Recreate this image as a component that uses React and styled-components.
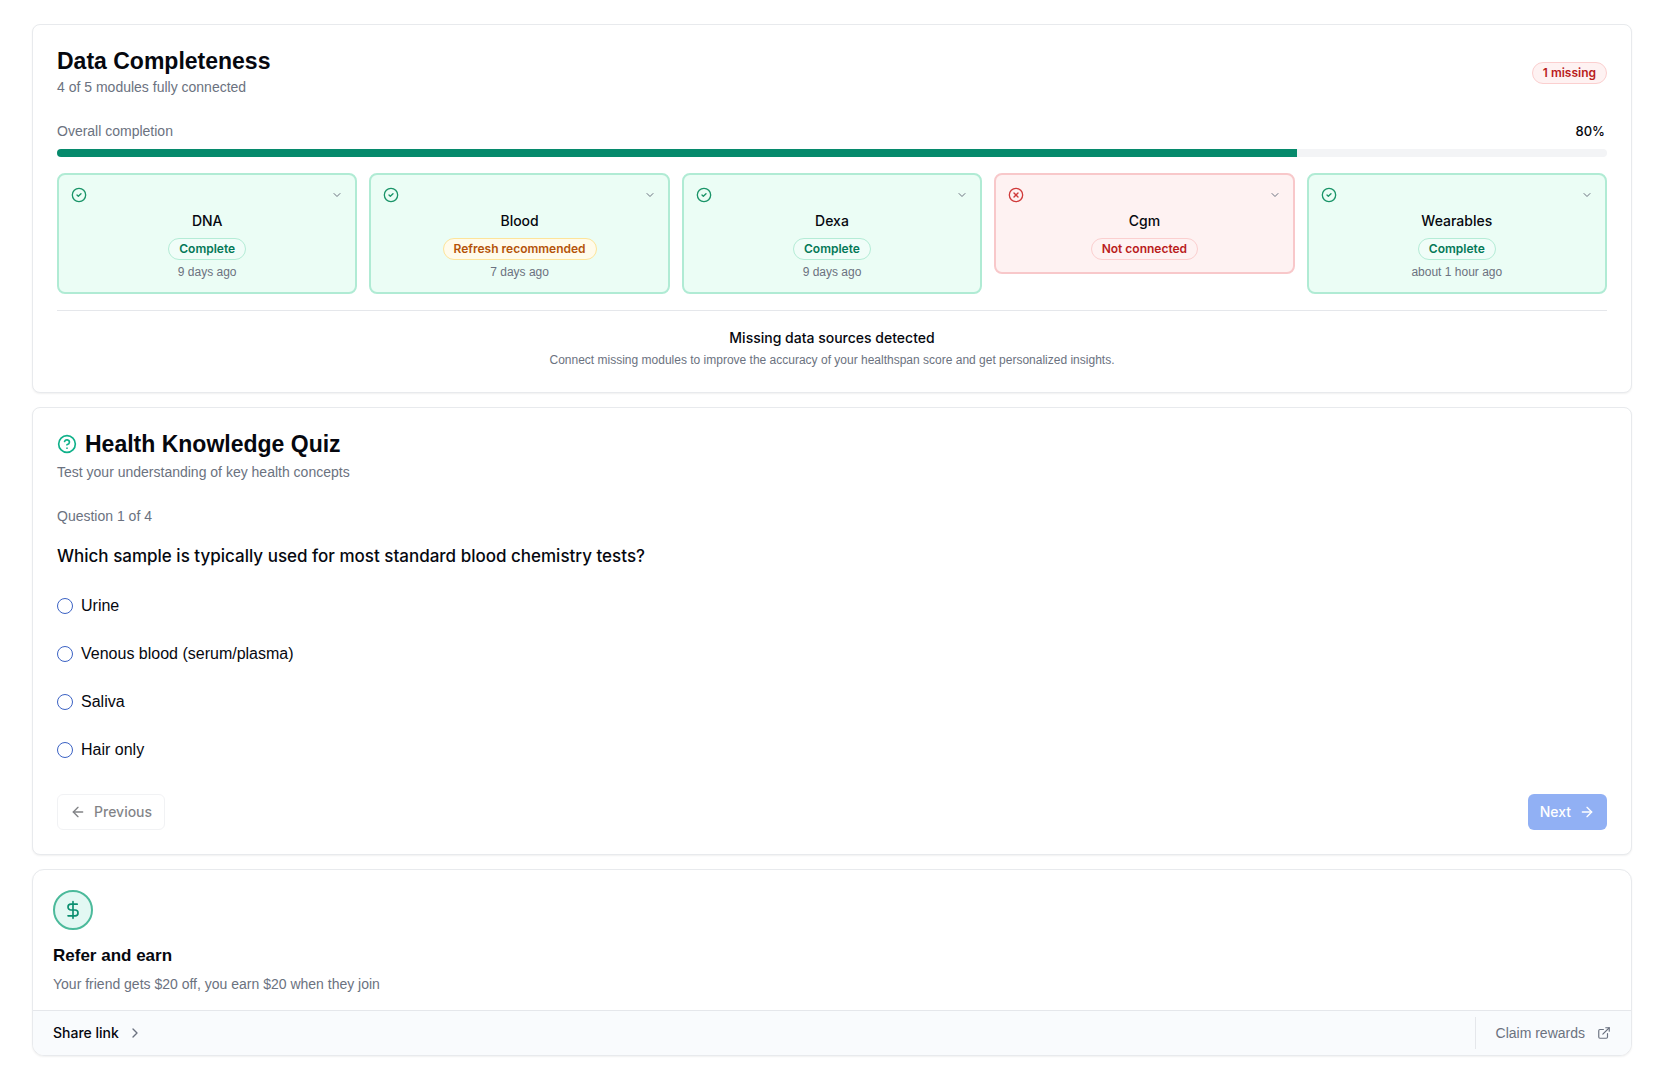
import { useState } from "react";
import styled, { createGlobalStyle } from "styled-components";
import {
  ArrowLeft,
  ArrowRight,
  ChevronDown,
  ChevronRight,
  CircleCheck,
  CircleHelp,
  CircleX,
  DollarSign,
  ExternalLink,
} from "lucide-react";

const modules = [
  { name: "DNA", status: "Complete", tone: "green", updated: "9 days ago" },
  { name: "Blood", status: "Refresh recommended", tone: "amber", updated: "7 days ago" },
  { name: "Dexa", status: "Complete", tone: "green", updated: "9 days ago" },
  { name: "Cgm", status: "Not connected", tone: "red", missing: true },
  { name: "Wearables", status: "Complete", tone: "green", updated: "about 1 hour ago" },
];

const answers = ["Urine", "Venous blood (serum/plasma)", "Saliva", "Hair only"];

const tones = {
  green: { text: "#047857", bg: "#f0fdf8", border: "#b4ecd6" },
  amber: { text: "#b45309", bg: "#fffbeb", border: "#fde49a" },
  red: { text: "#b91c1c", bg: "#fef2f2", border: "#fbcfcf" },
};

const DataCompleteness = () => {
  const connected = modules.filter((module) => !module.missing).length;
  const percent = (connected / modules.length) * 100;

  return (
    <Card>
      <CardHeader>
        <div>
          <CardTitle>Data Completeness</CardTitle>
          <Muted>
            {connected} of {modules.length} modules fully connected
          </Muted>
        </div>
        <Badge $tone="red">{modules.length - connected} missing</Badge>
      </CardHeader>
      <ProgressLabel>
        <Muted as="span">Overall completion</Muted>
        <Percent>{percent}%</Percent>
      </ProgressLabel>
      <Track role="progressbar" aria-label="Overall completion" aria-valuenow={percent}>
        <Bar style={{ width: `${percent}%` }} />
      </Track>
      <ModuleGrid>
        {modules.map((module) => (
          <ModuleItem key={module.name} module={module} />
        ))}
      </ModuleGrid>
      <Notice>
        <NoticeTitle>Missing data sources detected</NoticeTitle>
        <Small>
          Connect missing modules to improve the accuracy of your healthspan score and get
          personalized insights.
        </Small>
      </Notice>
    </Card>
  );
};

const ModuleItem = ({ module }) => {
  const { name, status, tone, updated, missing } = module;

  return (
    <ModuleButton type="button" $missing={missing}>
      <ModuleTop>
        {missing ? <CircleX size={16} color="#d03a3a" /> : <CircleCheck size={16} color="#1a9468" />}
        <ChevronDown size={12} />
      </ModuleTop>
      <ModuleName>{name}</ModuleName>
      <Badge $tone={tone}>{status}</Badge>
      {updated && <Small as="span">{updated}</Small>}
    </ModuleButton>
  );
};

const Quiz = () => {
  const [answer, setAnswer] = useState(null);

  return (
    <Card>
      <QuizHeader>
        <QuizTitle>
          <CircleHelp size={20} color="#10b18a" />
          Health Knowledge Quiz
        </QuizTitle>
        <Muted>Test your understanding of key health concepts</Muted>
      </QuizHeader>
      <Muted>Question 1 of 4</Muted>
      <Question>
        <legend>Which sample is typically used for most standard blood chemistry tests?</legend>
        {answers.map((text) => (
          <Option key={text}>
            <input
              type="radio"
              name="answer"
              checked={answer === text}
              onChange={() => setAnswer(text)}
            />
            {text}
          </Option>
        ))}
      </Question>
      <QuizFooter>
        <QuizButton type="button" disabled>
          <ArrowLeft size={16} />
          Previous
        </QuizButton>
        <QuizButton type="button" $primary disabled={answer === null}>
          Next
          <ArrowRight size={16} />
        </QuizButton>
      </QuizFooter>
    </Card>
  );
};

const Referral = () => (
  <ReferCard>
    <ReferBody>
      <Coin>
        <DollarSign size={20} />
      </Coin>
      <ReferTitle>Refer and earn</ReferTitle>
      <Muted>Your friend gets $20 off, you earn $20 when they join</Muted>
    </ReferBody>
    <ReferFooter>
      <ShareButton type="button">
        Share link
        <ChevronRight size={16} />
      </ShareButton>
      <ClaimLink href="#rewards">
        Claim rewards
        <ExternalLink size={14} />
      </ClaimLink>
    </ReferFooter>
  </ReferCard>
);

const App = () => (
  <>
    <GlobalStyle />
    <Page>
      <DataCompleteness />
      <Quiz />
      <Referral />
    </Page>
  </>
);

const GlobalStyle = createGlobalStyle`
  *, *::before, *::after {
    box-sizing: border-box;
  }
  body {
    margin: 0;
    background: #fff;
    color: #06080f;
    font-family: "Liberation Sans", Arial, sans-serif;
    font-size: 14px;
    line-height: 20px;
  }
  h2, h3, p {
    margin: 0;
  }
  svg {
    flex-shrink: 0;
  }
  button {
    font: inherit;
    color: inherit;
    cursor: pointer;
  }
`;

const Page = styled.main`
  display: flex;
  flex-direction: column;
  gap: 14px;
  padding: 24px 32px;
`;

const Card = styled.section`
  padding: 24px;
  background: #fff;
  border: 1px solid #e8eaed;
  border-radius: 8px;
  box-shadow: 0 1px 2px rgba(0, 0, 0, 0.06);
`;

const CardHeader = styled.header`
  display: flex;
  align-items: center;
  justify-content: space-between;
  margin-bottom: 24px;
`;

const CardTitle = styled.h2`
  margin-bottom: 4px;
  font-size: 23px;
  font-weight: 700;
  line-height: 24px;
`;

const Muted = styled.p`
  color: #6b7280;
`;

const Small = styled.p`
  color: #6b7280;
  font-size: 12px;
  line-height: 16px;
`;

const Badge = styled.span`
  padding: 2px 10px;
  border: 1px solid ${({ $tone }) => tones[$tone].border};
  border-radius: 11px;
  background: ${({ $tone }) => tones[$tone].bg};
  color: ${({ $tone }) => tones[$tone].text};
  font-family: Inter, sans-serif;
  font-size: 12px;
  font-weight: 600;
  line-height: 16px;
`;

const ProgressLabel = styled.div`
  display: flex;
  justify-content: space-between;
  margin-bottom: 8px;
`;

const Percent = styled.span`
  padding-right: 2px;
  font-family: Inter, sans-serif;
  font-size: 13px;
  font-weight: 500;
`;

const Track = styled.div`
  height: 8px;
  overflow: hidden;
  border-radius: 4px;
  background: #f3f4f6;
`;

const Bar = styled.div`
  height: 100%;
  background: #068a6c;
`;

const ModuleGrid = styled.div`
  display: grid;
  grid-template-columns: repeat(5, 1fr);
  align-items: start;
  gap: 12px;
  margin: 16px 0;
`;

const ModuleButton = styled.button`
  display: flex;
  flex-direction: column;
  align-items: center;
  padding: 12px;
  border: 2px solid ${({ $missing }) => ($missing ? "#f8c8ca" : "#b0ebd4")};
  border-radius: 8px;
  background: ${({ $missing }) => ($missing ? "#fef2f2" : "#ebfdf5")};
  ${Small} {
    margin-top: 4px;
  }
`;

const ModuleTop = styled.span`
  display: flex;
  align-items: center;
  align-self: stretch;
  justify-content: space-between;
  margin-bottom: 8px;
  color: #6b7280;
`;

const ModuleName = styled.span`
  margin-bottom: 7px;
  font-family: Inter, sans-serif;
  font-weight: 500;
  line-height: 20px;
`;

const Notice = styled.div`
  padding-top: 17px;
  border-top: 1px solid #e5e7eb;
  text-align: center;
`;

const NoticeTitle = styled.h3`
  margin-bottom: 4px;
  font-family: Inter, sans-serif;
  font-size: 14px;
  font-weight: 500;
`;

const QuizHeader = styled.header`
  margin-bottom: 24px;
`;

const QuizTitle = styled(CardTitle)`
  display: flex;
  align-items: center;
  gap: 8px;
  margin-bottom: 6px;
`;

const Question = styled.fieldset`
  display: flex;
  flex-direction: column;
  gap: 24px;
  margin: 16px 0 32px;
  padding: 0;
  border: 0;
  legend {
    margin-bottom: 24px;
    padding: 0;
    font-family: Inter, sans-serif;
    font-size: 17px;
    font-weight: 500;
    line-height: 28px;
  }
`;

const Option = styled.label`
  display: flex;
  align-items: center;
  align-self: flex-start;
  gap: 8px;
  font-size: 16px;
  line-height: 24px;
  cursor: pointer;
  input {
    appearance: none;
    width: 16px;
    height: 16px;
    margin: 0;
    border: 1px solid #3b62c4;
    border-radius: 50%;
    &:checked {
      background: radial-gradient(#2563eb 40%, transparent 45%);
    }
  }
`;

const QuizFooter = styled.footer`
  display: flex;
  justify-content: space-between;
`;

const QuizButton = styled.button`
  display: flex;
  align-items: center;
  gap: 8px;
  height: 36px;
  padding: 0 12px;
  border: ${({ $primary }) => ($primary ? "0" : "1px solid #e5e7eb")};
  border-radius: 6px;
  background: ${({ $primary }) => ($primary ? "#2563eb" : "#fff")};
  color: ${({ $primary }) => ($primary ? "#fff" : "#06080f")};
  font-family: Inter, sans-serif;
  font-weight: 500;
  &:disabled {
    opacity: 0.5;
    cursor: default;
  }
`;

const ReferCard = styled(Card)`
  padding: 0;
  overflow: hidden;
  border-radius: 12px;
`;

const ReferBody = styled.div`
  padding: 20px 20px 16px;
`;

const Coin = styled.div`
  display: flex;
  align-items: center;
  justify-content: center;
  width: 40px;
  height: 40px;
  border: 2px solid #4cba9b;
  border-radius: 50%;
  background: #e3f8f3;
  color: #0b8f70;
`;

const ReferTitle = styled.h3`
  margin: 12px 0 4px;
  font-size: 17px;
  font-weight: 700;
  line-height: 28px;
`;

const ReferFooter = styled.footer`
  display: flex;
  align-items: center;
  justify-content: space-between;
  padding: 6px 20px;
  border-top: 1px solid #e5e7eb;
  background: #f9fbfd;
`;

const ShareButton = styled.button`
  display: flex;
  align-items: center;
  gap: 8px;
  padding: 0;
  border: 0;
  background: none;
  font-family: Inter, sans-serif;
  font-weight: 500;
  svg {
    color: #6b7280;
  }
`;

const ClaimLink = styled.a`
  display: flex;
  align-items: center;
  gap: 12px;
  height: 32px;
  padding-left: 20px;
  border-left: 1px solid #e5e7eb;
  color: #6b7280;
  text-decoration: none;
`;

export default App;
